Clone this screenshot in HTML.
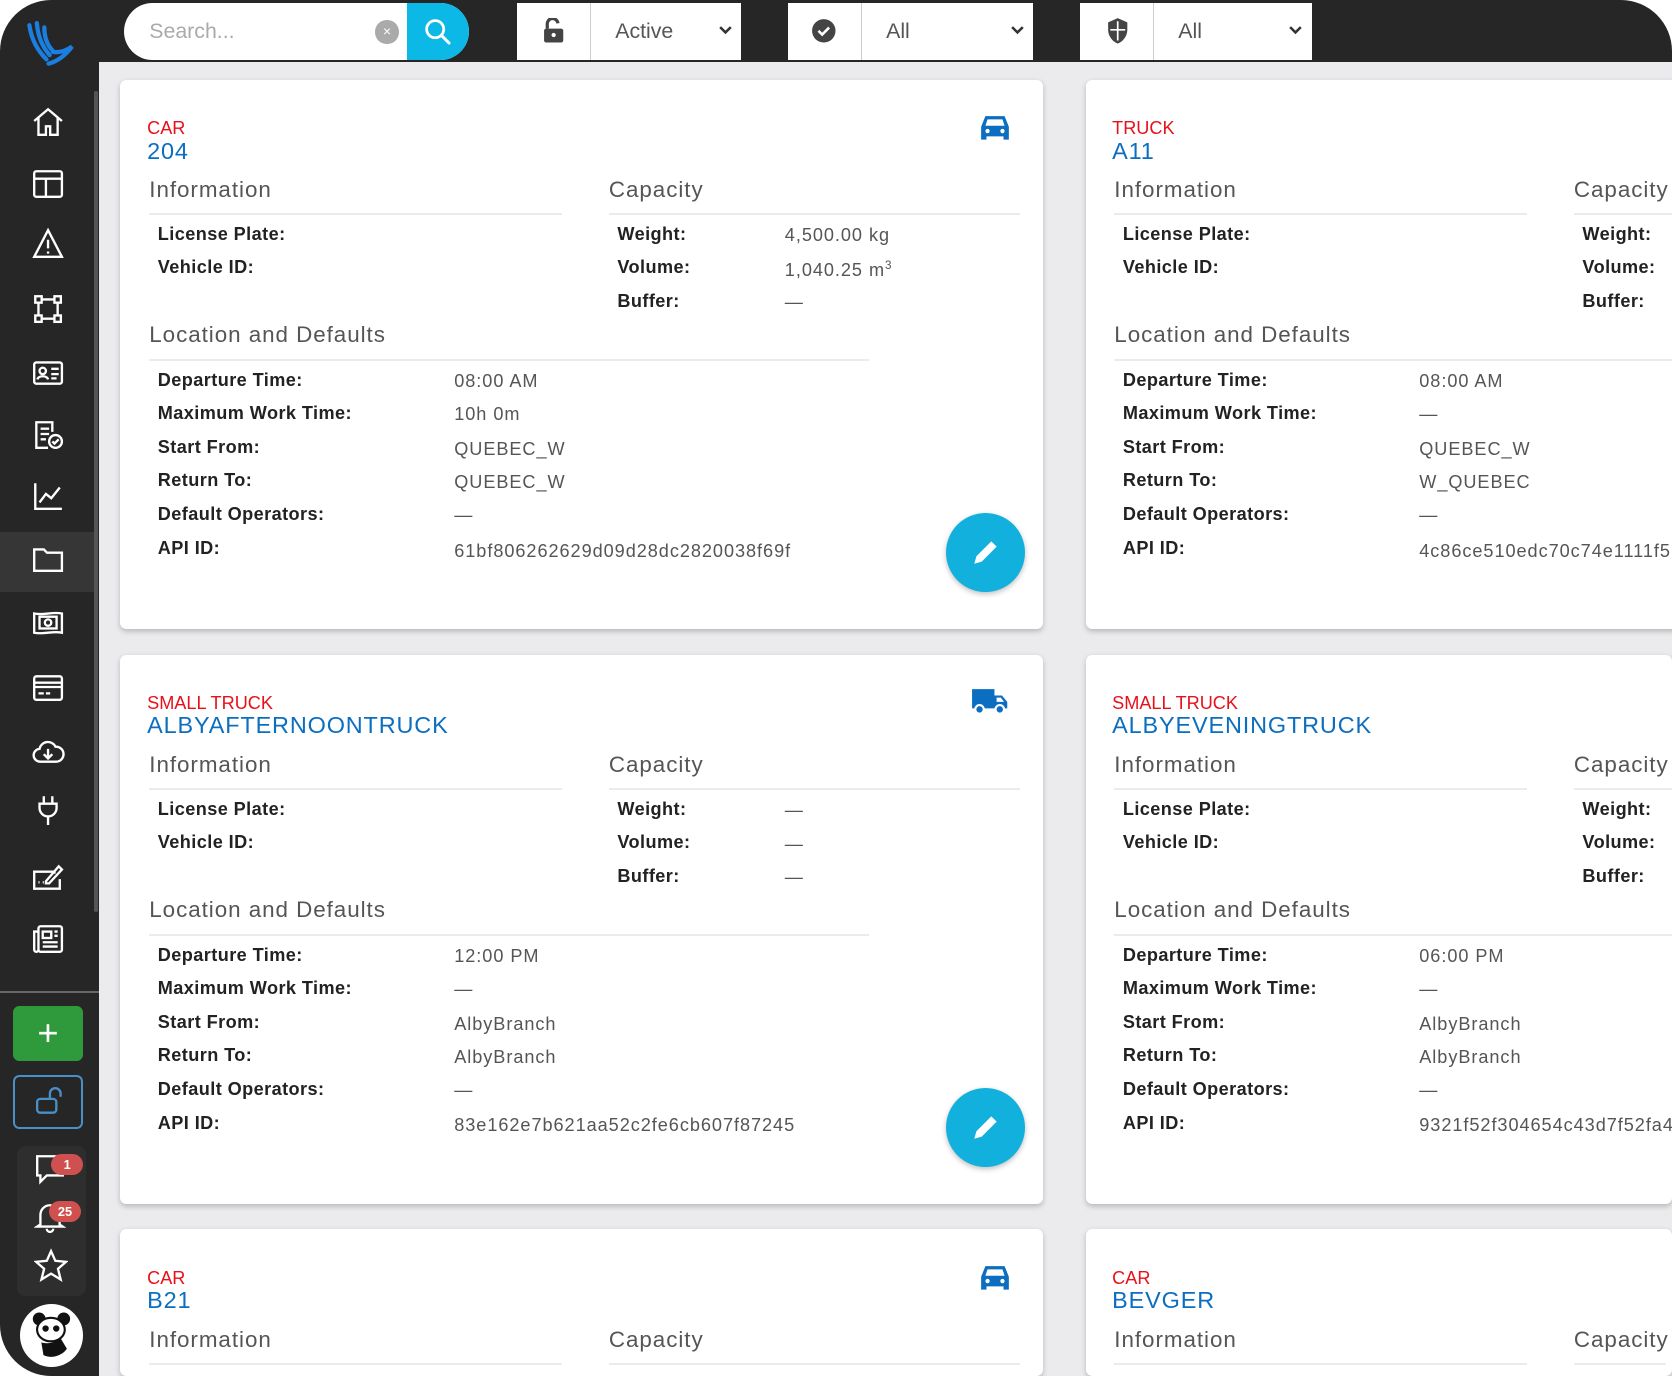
<!DOCTYPE html>
<html><head><meta charset="utf-8"><style>
*{margin:0;padding:0;box-sizing:border-box}
html,body{width:1672px;height:1376px;overflow:hidden;background:#fff}
#w{zoom:1.06633;width:1568px;height:1290px;position:relative;overflow:hidden;border-radius:48px 48px 0 48px;background:#262626;font-family:"Liberation Sans",Arial,sans-serif}
#main{position:absolute;left:93px;top:58px;right:0;bottom:0;background:#ebebed}
.sb{position:absolute;left:88px;top:85px;width:4px;height:770px;background:#555;border-radius:2px}
.ic{position:absolute;left:29px;width:32px;height:32px}
.card{position:absolute;width:865px;height:515px;background:#fff;border-radius:6px;box-shadow:0 2px 5px rgba(0,0,0,.22);overflow:hidden}
.card *{position:absolute;white-space:nowrap}
.ty{left:25px;top:36px;font-size:17px;color:#e8101a}
.nm{left:25px;top:54px;font-size:22px;color:#0c6ec0;letter-spacing:.8px}
.h{font-size:21px;color:#555;top:91px;letter-spacing:.9px}
.ln{height:2px;background:#ebebeb}
.l{font-size:17px;font-weight:bold;color:#222;left:35px;letter-spacing:.4px}
.cl{left:466px;font-size:17px;font-weight:bold;color:#222;letter-spacing:.4px}
.v{font-size:17px;color:#555;letter-spacing:.9px}
.fab{left:774px;top:406px;width:74px;height:74px;border-radius:50%;background:#12b0dc;box-shadow:0 2px 5px rgba(0,0,0,.25)}
.flt{position:absolute;top:3px;height:53px;background:#fff}
.flt .d{position:absolute;left:68px;top:0;width:1px;height:53px;background:#ccc}
.flt .t{position:absolute;left:92px;top:15px;font-size:20px;color:#555}
.flt .c{position:absolute;right:8px;top:20px}
</style></head><body><div id="w">
<svg style="position:absolute;left:22px;top:20px" width="52" height="46" viewBox="0 0 52 46"><path d="M6 4c2 14 8 24 16 32M13 2c1 13 5 22 12 30M20 6c0 10 3 17 8 22M24 40c8-2 16-8 22-16-6 4-12 6-18 5" stroke="#1a7fe0" stroke-width="4" fill="none" stroke-linecap="round"/></svg>
<div style="position:absolute;left:116px;top:3px;width:324px;height:53px;background:#fff;border-radius:27px;overflow:hidden">
<div style="position:absolute;left:24px;top:15px;font-size:20px;color:#aaa">Search...</div>
<div style="position:absolute;left:236px;top:16px;width:22px;height:22px;border-radius:50%;background:#aaa;color:#fff;font-size:13px;text-align:center;line-height:22px">×</div>
<div style="position:absolute;left:266px;top:0;width:58px;height:53px;background:#0bb8e6"><svg style="position:absolute;left:16px;top:14px" width="26" height="26" viewBox="0 0 26 26"><circle cx="10.5" cy="10.5" r="8" stroke="#fff" stroke-width="2.6" fill="none"/><path d="M16.5 16.5l7 7" stroke="#fff" stroke-width="2.8" stroke-linecap="round"/></svg></div></div>
<div class="flt" style="left:485px;width:210px"><svg style="position:absolute;left:24px;top:14px" width="20" height="24" viewBox="0 0 20 24"><path d="M4 10V6a5 5 0 0 1 10-1" stroke="#444" stroke-width="3" fill="none"/><rect x="1" y="10" width="18" height="13" rx="2" fill="#444"/><circle cx="10" cy="16" r="2" fill="#fff"/></svg><div class="d"></div><div class="t">Active</div><svg class="c" width="14" height="10"><path d="M2 2l5 5 5-5" stroke="#333" stroke-width="2.4" fill="none"/></svg></div>
<div class="flt" style="left:739px;width:230px"><svg style="position:absolute;left:22px;top:14px" width="24" height="24" viewBox="0 0 24 24"><circle cx="12" cy="12" r="11" fill="#444"/><path d="M7 12l3.5 3.5L17 9" stroke="#fff" stroke-width="2.4" fill="none"/></svg><div class="d"></div><div class="t">All</div><svg class="c" width="14" height="10"><path d="M2 2l5 5 5-5" stroke="#333" stroke-width="2.4" fill="none"/></svg></div>
<div class="flt" style="left:1013px;width:217px"><svg style="position:absolute;left:24px;top:13px" width="22" height="26" viewBox="0 0 22 26"><path d="M11 1L2 5v7c0 6 4 11 9 13 5-2 9-7 9-13V5z" fill="#444"/><path d="M11 4v18M4 12h14" stroke="#fff" stroke-width="1.6"/></svg><div class="d"></div><div class="t">All</div><svg class="c" width="14" height="10"><path d="M2 2l5 5 5-5" stroke="#333" stroke-width="2.4" fill="none"/></svg></div>

<div style="position:absolute;left:0;top:499px;width:88px;height:56px;background:#363636"></div>
<svg class="ic" style="top:98px" viewBox="0 0 32 32" fill="none" stroke="#fff" stroke-width="2.2"><path d="M3 15L16 4l13 11M7 12v16h7v-8h4v8h7V12"/></svg>
<svg class="ic" style="top:157px" viewBox="0 0 32 32" fill="none" stroke="#fff" stroke-width="2.2"><rect x="3" y="4" width="26" height="24" rx="2"/><path d="M3 11h26M14 11v17"/></svg>
<svg class="ic" style="top:213px" viewBox="0 0 32 32" fill="none" stroke="#fff" stroke-width="2.2"><path d="M16 3L3 28h26z M16 12v8M16 23v2"/></svg>
<svg class="ic" style="top:274px" viewBox="0 0 32 32" fill="none" stroke="#fff" stroke-width="2.2"><rect x="4" y="4" width="6" height="6"/><rect x="22" y="4" width="6" height="6"/><rect x="4" y="22" width="6" height="6"/><rect x="22" y="22" width="6" height="6"/><path d="M10 7h12M7 10v12M25 10v12M10 25h12"/></svg>
<svg class="ic" style="top:334px" viewBox="0 0 32 32" fill="none" stroke="#fff" stroke-width="2.2"><rect x="3" y="6" width="26" height="20" rx="2"/><circle cx="11" cy="14" r="3"/><path d="M6 22c1-4 9-4 10 0M19 12h7M19 17h7M19 21h5"/></svg>
<svg class="ic" style="top:392px" viewBox="0 0 32 32" fill="none" stroke="#fff" stroke-width="2.2"><path d="M20 13V4H5v24h11M9 10h8M9 15h8M9 20h5"/><circle cx="23" cy="22" r="6"/><path d="M20 22l2 2 4-4"/></svg>
<svg class="ic" style="top:449px" viewBox="0 0 32 32" fill="none" stroke="#fff" stroke-width="2.2"><path d="M4 4v24h25M8 22l6-8 5 4 8-10"/></svg>
<svg class="ic" style="top:508px" viewBox="0 0 32 32" fill="none" stroke="#fff" stroke-width="2.2"><path d="M3 7h9l3 3h14v17H3z"/></svg>
<svg class="ic" style="top:567px" viewBox="0 0 32 32" fill="none" stroke="#fff" stroke-width="2.2"><path d="M3 8c9 2 17-2 26 0v18c-9-2-17 2-26 0z"/><rect x="8" y="11" width="16" height="11"/><circle cx="16" cy="16.5" r="3"/></svg>
<svg class="ic" style="top:629px" viewBox="0 0 32 32" fill="none" stroke="#fff" stroke-width="2.2"><rect x="3" y="5" width="26" height="22" rx="2"/><path d="M3 11h26M3 15h26M7 21h5M14 21h4"/></svg>
<svg class="ic" style="top:689px" viewBox="0 0 32 32" fill="none" stroke="#fff" stroke-width="2.2"><path d="M9 25a6 6 0 0 1-1-12 8 8 0 0 1 15-2 6 6 0 0 1 1 14z M16 13v9M12 18l4 4 4-4"/></svg>
<svg class="ic" style="top:744px" viewBox="0 0 32 32" fill="none" stroke="#fff" stroke-width="2.2"><path d="M12 3v7M20 3v7M8 10h16v4a8 8 0 0 1-16 0zM16 22v8"/></svg>
<svg class="ic" style="top:807px" viewBox="0 0 32 32" fill="none" stroke="#fff" stroke-width="2.2"><path d="M22 12v-2H3v16h24v-9M7 20h1M11 20h1M14 19l12-14 3 3-12 13h-3z"/></svg>
<svg class="ic" style="top:865px" viewBox="0 0 32 32" fill="none" stroke="#fff" stroke-width="2.2"><rect x="7" y="4" width="22" height="24" rx="2"/><path d="M7 9H3v17a2 2 0 0 0 4 0"/><rect x="11" y="9" width="8" height="6"/><path d="M22 9h3M22 13h3M11 19h14M11 23h14"/></svg>
<div style="position:absolute;left:0;top:929px;width:93px;height:2px;background:#666"></div>
<div style="position:absolute;left:12px;top:943px;width:66px;height:52px;background:#2e9a3c;border-radius:6px;color:#fff;font-size:34px;text-align:center;line-height:50px">+</div>
<div style="position:absolute;left:12px;top:1008px;width:66px;height:51px;border:2px solid #4a90c8;border-radius:6px"><svg style="position:absolute;left:19px;top:8px" width="28" height="30" viewBox="0 0 28 30" fill="none" stroke="#4a90c8" stroke-width="2.2"><rect x="2" y="13" width="18" height="13" rx="3"/><path d="M14 13V8a5 5 0 0 1 10 0v3"/></svg></div>
<div style="position:absolute;left:16px;top:1075px;width:65px;height:140px;background:#2e2e2e;border-radius:8px"></div>
<svg style="position:absolute;left:32px;top:1080px" width="30" height="32" viewBox="0 0 30 32" fill="none" stroke="#fff" stroke-width="2.2"><path d="M3 4h24v18H12l-6 6v-6H3z"/></svg>
<div style="position:absolute;left:48px;top:1082px;width:30px;height:20px;background:#d05050;border-radius:10px;color:#fff;font-size:12px;font-weight:bold;text-align:center;line-height:20px">1</div>
<svg style="position:absolute;left:32px;top:1126px" width="30" height="30" viewBox="0 0 30 30" fill="none" stroke="#fff" stroke-width="2.2"><path d="M6 22V13a9 9 0 0 1 18 0v9l3 2H3zM12 26a3 3 0 0 0 6 0"/></svg>
<div style="position:absolute;left:46px;top:1126px;width:30px;height:20px;background:#d05050;border-radius:10px;color:#fff;font-size:12px;font-weight:bold;text-align:center;line-height:20px">25</div>
<svg style="position:absolute;left:32px;top:1170px" width="32" height="32" viewBox="0 0 32 32" fill="none" stroke="#fff" stroke-width="2.2"><path d="M16 3l4 9 10 1-7.5 6.5 2.5 10-9-5.5-9 5.5 2.5-10L2 13l10-1z"/></svg>
<div style="position:absolute;left:19px;top:1223px;width:59px;height:59px;background:#fff;border-radius:50%;overflow:hidden"><svg width="59" height="59" viewBox="0 0 59 59"><circle cx="18" cy="14" r="6" fill="#111"/><circle cx="41" cy="14" r="6" fill="#111"/><ellipse cx="29" cy="24" rx="13" ry="11" fill="#fff" stroke="#111" stroke-width="2"/><circle cx="24" cy="23" r="3" fill="#111"/><circle cx="34" cy="23" r="3" fill="#111"/><path d="M20 36c6 2 14 0 18-4l6 10c-4 6-14 10-22 6z" fill="#111"/></svg></div>

<div id="main"><div class="sb" style="left:-5px;top:27px"></div></div>

<div class="card" style="left:113px;top:75px"><div class="ty">CAR</div><div class="nm">204</div>
<svg style="left:805px;top:32px" width="30" height="26" viewBox="0 0 30 26"><path d="M6 2h18l4 10v12h-5v-3H7v3H2V12z" fill="#0c6ec0"/><path d="M8 5h14l2 6H6z" fill="#fff"/><circle cx="8" cy="16" r="2" fill="#fff"/><circle cx="22" cy="16" r="2" fill="#fff"/></svg>
<div class="h" style="left:27px">Information</div><div class="ln" style="left:27px;top:125px;width:387px"></div>
<div class="h" style="left:458px">Capacity</div><div class="ln" style="left:458px;top:125px;width:386px"></div>
<div class="l" style="top:135px">License Plate:</div><div class="l" style="top:166px">Vehicle ID:</div>
<div class="cl" style="top:135px">Weight:</div><div class="cl" style="top:166px">Volume:</div><div class="cl" style="top:198px">Buffer:</div>
<div class="v" style="left:623px;top:136px">4,500.00 kg</div><div class="v" style="left:623px;top:168px">1,040.25 m<sup style="position:static;font-size:11px">3</sup></div><div class="v" style="left:623px;top:199px">—</div>
<div class="h" style="left:27px;top:227px">Location and Defaults</div><div class="ln" style="left:27px;top:262px;width:675px"></div>
<div class="l" style="top:272px">Departure Time:</div><div class="l" style="top:303px">Maximum Work Time:</div><div class="l" style="top:335px">Start From:</div><div class="l" style="top:366px">Return To:</div><div class="l" style="top:398px">Default Operators:</div><div class="l" style="top:430px">API ID:</div>
<div class="v" style="left:313px;top:273px">08:00 AM</div><div class="v" style="left:313px;top:304px">10h 0m</div><div class="v" style="left:313px;top:337px">QUEBEC_W</div><div class="v" style="left:313px;top:368px">QUEBEC_W</div><div class="v" style="left:313px;top:399px">—</div><div class="v" style="left:313px;top:432px">61bf806262629d09d28dc2820038f69f</div>
<div class="fab"><svg style="left:23px;top:22px" width="30" height="30" viewBox="0 0 30 30"><path d="M4 26l2-7 14-14 5 5-14 14z" fill="#fff"/></svg></div></div>

<div class="card" style="left:1018px;top:75px"><div class="ty">TRUCK</div><div class="nm">A11</div>
<div class="h" style="left:27px">Information</div><div class="ln" style="left:27px;top:125px;width:387px"></div>
<div class="h" style="left:458px">Capacity</div><div class="ln" style="left:458px;top:125px;width:386px"></div>
<div class="l" style="top:135px">License Plate:</div><div class="l" style="top:166px">Vehicle ID:</div>
<div class="cl" style="top:135px">Weight:</div><div class="cl" style="top:166px">Volume:</div><div class="cl" style="top:198px">Buffer:</div>
<div class="h" style="left:27px;top:227px">Location and Defaults</div><div class="ln" style="left:27px;top:262px;width:675px"></div>
<div class="l" style="top:272px">Departure Time:</div><div class="l" style="top:303px">Maximum Work Time:</div><div class="l" style="top:335px">Start From:</div><div class="l" style="top:366px">Return To:</div><div class="l" style="top:398px">Default Operators:</div><div class="l" style="top:430px">API ID:</div>
<div class="v" style="left:313px;top:273px">08:00 AM</div><div class="v" style="left:313px;top:304px">—</div><div class="v" style="left:313px;top:337px">QUEBEC_W</div><div class="v" style="left:313px;top:368px">W_QUEBEC</div><div class="v" style="left:313px;top:399px">—</div><div class="v" style="left:313px;top:432px">4c86ce510edc70c74e1111f5</div></div>

<div class="card" style="left:113px;top:614px"><div class="ty">SMALL TRUCK</div><div class="nm">ALBYAFTERNOONTRUCK</div>
<svg style="left:798px;top:30px" width="36" height="28" viewBox="0 0 36 28"><path d="M1 2h21v18H1zM22 8h7l5 6v6H22z" fill="#0c6ec0"/><path d="M24 10h4l3 4h-7z" fill="#fff"/><circle cx="8" cy="21" r="4" fill="#0c6ec0" stroke="#fff" stroke-width="2"/><circle cx="27" cy="21" r="4" fill="#0c6ec0" stroke="#fff" stroke-width="2"/></svg>
<div class="h" style="left:27px">Information</div><div class="ln" style="left:27px;top:125px;width:387px"></div>
<div class="h" style="left:458px">Capacity</div><div class="ln" style="left:458px;top:125px;width:386px"></div>
<div class="l" style="top:135px">License Plate:</div><div class="l" style="top:166px">Vehicle ID:</div>
<div class="cl" style="top:135px">Weight:</div><div class="cl" style="top:166px">Volume:</div><div class="cl" style="top:198px">Buffer:</div>
<div class="v" style="left:623px;top:136px">—</div><div class="v" style="left:623px;top:168px">—</div><div class="v" style="left:623px;top:199px">—</div>
<div class="h" style="left:27px;top:227px">Location and Defaults</div><div class="ln" style="left:27px;top:262px;width:675px"></div>
<div class="l" style="top:272px">Departure Time:</div><div class="l" style="top:303px">Maximum Work Time:</div><div class="l" style="top:335px">Start From:</div><div class="l" style="top:366px">Return To:</div><div class="l" style="top:398px">Default Operators:</div><div class="l" style="top:430px">API ID:</div>
<div class="v" style="left:313px;top:273px">12:00 PM</div><div class="v" style="left:313px;top:304px">—</div><div class="v" style="left:313px;top:337px">AlbyBranch</div><div class="v" style="left:313px;top:368px">AlbyBranch</div><div class="v" style="left:313px;top:399px">—</div><div class="v" style="left:313px;top:432px">83e162e7b621aa52c2fe6cb607f87245</div>
<div class="fab"><svg style="left:23px;top:22px" width="30" height="30" viewBox="0 0 30 30"><path d="M4 26l2-7 14-14 5 5-14 14z" fill="#fff"/></svg></div></div>

<div class="card" style="left:1018px;top:614px;width:550px"><div class="ty">SMALL TRUCK</div><div class="nm">ALBYEVENINGTRUCK</div>
<div class="h" style="left:27px">Information</div><div class="ln" style="left:27px;top:125px;width:387px"></div>
<div class="h" style="left:458px">Capacity</div><div class="ln" style="left:458px;top:125px;width:386px"></div>
<div class="l" style="top:135px">License Plate:</div><div class="l" style="top:166px">Vehicle ID:</div>
<div class="cl" style="top:135px">Weight:</div><div class="cl" style="top:166px">Volume:</div><div class="cl" style="top:198px">Buffer:</div>
<div class="h" style="left:27px;top:227px">Location and Defaults</div><div class="ln" style="left:27px;top:262px;width:675px"></div>
<div class="l" style="top:272px">Departure Time:</div><div class="l" style="top:303px">Maximum Work Time:</div><div class="l" style="top:335px">Start From:</div><div class="l" style="top:366px">Return To:</div><div class="l" style="top:398px">Default Operators:</div><div class="l" style="top:430px">API ID:</div>
<div class="v" style="left:313px;top:273px">06:00 PM</div><div class="v" style="left:313px;top:304px">—</div><div class="v" style="left:313px;top:337px">AlbyBranch</div><div class="v" style="left:313px;top:368px">AlbyBranch</div><div class="v" style="left:313px;top:399px">—</div><div class="v" style="left:313px;top:432px">9321f52f304654c43d7f52fa4</div></div>

<div class="card" style="left:113px;top:1153px;height:137px"><div class="ty">CAR</div><div class="nm">B21</div>
<svg style="left:805px;top:32px" width="30" height="26" viewBox="0 0 30 26"><path d="M6 2h18l4 10v12h-5v-3H7v3H2V12z" fill="#0c6ec0"/><path d="M8 5h14l2 6H6z" fill="#fff"/><circle cx="8" cy="16" r="2" fill="#fff"/><circle cx="22" cy="16" r="2" fill="#fff"/></svg>
<div class="h" style="left:27px">Information</div><div class="ln" style="left:27px;top:125px;width:387px"></div>
<div class="h" style="left:458px">Capacity</div><div class="ln" style="left:458px;top:125px;width:386px"></div></div>

<div class="card" style="left:1018px;top:1153px;height:137px;width:550px"><div class="ty">CAR</div><div class="nm">BEVGER</div>
<div class="h" style="left:27px">Information</div><div class="ln" style="left:27px;top:125px;width:387px"></div>
<div class="h" style="left:458px">Capacity</div><div class="ln" style="left:458px;top:125px;width:86px"></div></div>
</div></body></html>
